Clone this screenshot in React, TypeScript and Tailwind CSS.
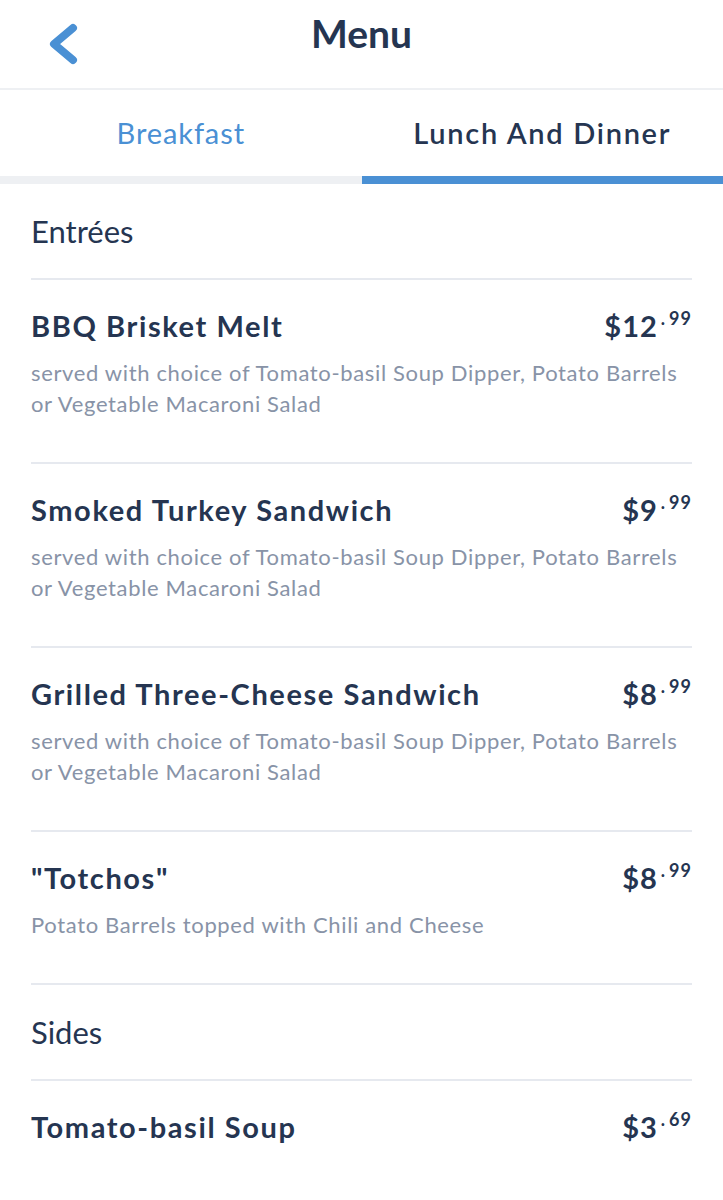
import React, { useState } from 'react';

type Item = { name: string; price: string; cents: string; desc?: string };

const entrees: Item[] = [
  {
    name: 'BBQ Brisket Melt',
    price: '$12',
    cents: '99',
    desc: 'served with choice of Tomato-basil Soup Dipper, Potato Barrels or Vegetable Macaroni Salad',
  },
  {
    name: 'Smoked Turkey Sandwich',
    price: '$9',
    cents: '99',
    desc: 'served with choice of Tomato-basil Soup Dipper, Potato Barrels or Vegetable Macaroni Salad',
  },
  {
    name: 'Grilled Three-Cheese Sandwich',
    price: '$8',
    cents: '99',
    desc: 'served with choice of Tomato-basil Soup Dipper, Potato Barrels or Vegetable Macaroni Salad',
  },
  { name: '"Totchos"', price: '$8', cents: '99', desc: 'Potato Barrels topped with Chili and Cheese' },
];

const sides: Item[] = [{ name: 'Tomato-basil Soup', price: '$3', cents: '69' }];

const MenuRow: React.FC<{ item: Item }> = ({ item }) => (
  <div className="border-t-2 border-[#e6e9ef] pt-[28px] pb-[43px]">
    <div className="flex items-start justify-between">
      <h4 className="text-[29px] leading-[36px] font-bold tracking-[1.6px] text-[#253551]">{item.name}</h4>
      <div className="flex items-start text-[29px] leading-[36px] font-bold tracking-[1px] text-[#253551]">
        <span>{item.price}</span>
        <span className="mt-[-2px] ml-[3px] text-[18px] leading-[24px] tracking-[1px]">
          <span className="mr-[3px]">.</span>
          {item.cents}
        </span>
      </div>
    </div>
    {item.desc && (
      <p className="mt-[13px] text-[22px] leading-[31px] tracking-[0.65px] text-[#8893a7]">{item.desc}</p>
    )}
  </div>
);

const Section: React.FC<{ title: string; items: Item[]; first?: boolean }> = ({ title, items, first }) => (
  <div className={first ? '' : 'border-t-2 border-[#e6e9ef]'}>
    <div className="flex h-[94px] items-center text-[31px] text-[#253551]">{title}</div>
    {items.map((item) => (
      <MenuRow key={item.name} item={item} />
    ))}
  </div>
);

export default function App() {
  const [tab, setTab] = useState<'breakfast' | 'lunch'>('lunch');

  return (
    <div className="min-h-[1200px] bg-white font-['Lato',_sans-serif] antialiased">
      <header className="grid h-[90px] grid-cols-[1fr_auto_1fr] items-start border-b-2 border-[#eef0f3]">
        <button className="mt-[22px] ml-[49px] w-fit">
          <svg width="30" height="44" viewBox="0 0 30 44" className="block">
            <path
              d="M24 6 L5 22 L24 38"
              fill="none"
              stroke="#4a90d4"
              strokeWidth="8"
              strokeLinecap="round"
              strokeLinejoin="round"
            />
          </svg>
        </button>
        <h1 className="mt-[9px] text-[39px] leading-[48px] font-bold text-[#253551]">Menu</h1>
        <div />
      </header>

      <nav className="grid grid-cols-2">
        <button
          onClick={() => setTab('breakfast')}
          className="flex h-[86px] items-center justify-center text-[29px] leading-[36px] tracking-[0.9px] text-[#4a90d4]"
        >
          Breakfast
        </button>
        <button
          onClick={() => setTab('lunch')}
          className="flex h-[86px] items-center justify-center text-[29px] leading-[36px] font-semibold tracking-[1.7px] text-[#253551]"
        >
          Lunch And Dinner
        </button>
        <div className={tab === 'breakfast' ? 'h-[8px] bg-[#4a90d4]' : 'h-[8px] bg-[#eef0f3]'} />
        <div className={tab === 'lunch' ? 'h-[8px] bg-[#4a90d4]' : 'h-[8px] bg-[#eef0f3]'} />
      </nav>

      <main className="px-[31px]">
        <Section title="Entrées" items={entrees} first />
        <Section title="Sides" items={sides} />
      </main>
    </div>
  );
}
